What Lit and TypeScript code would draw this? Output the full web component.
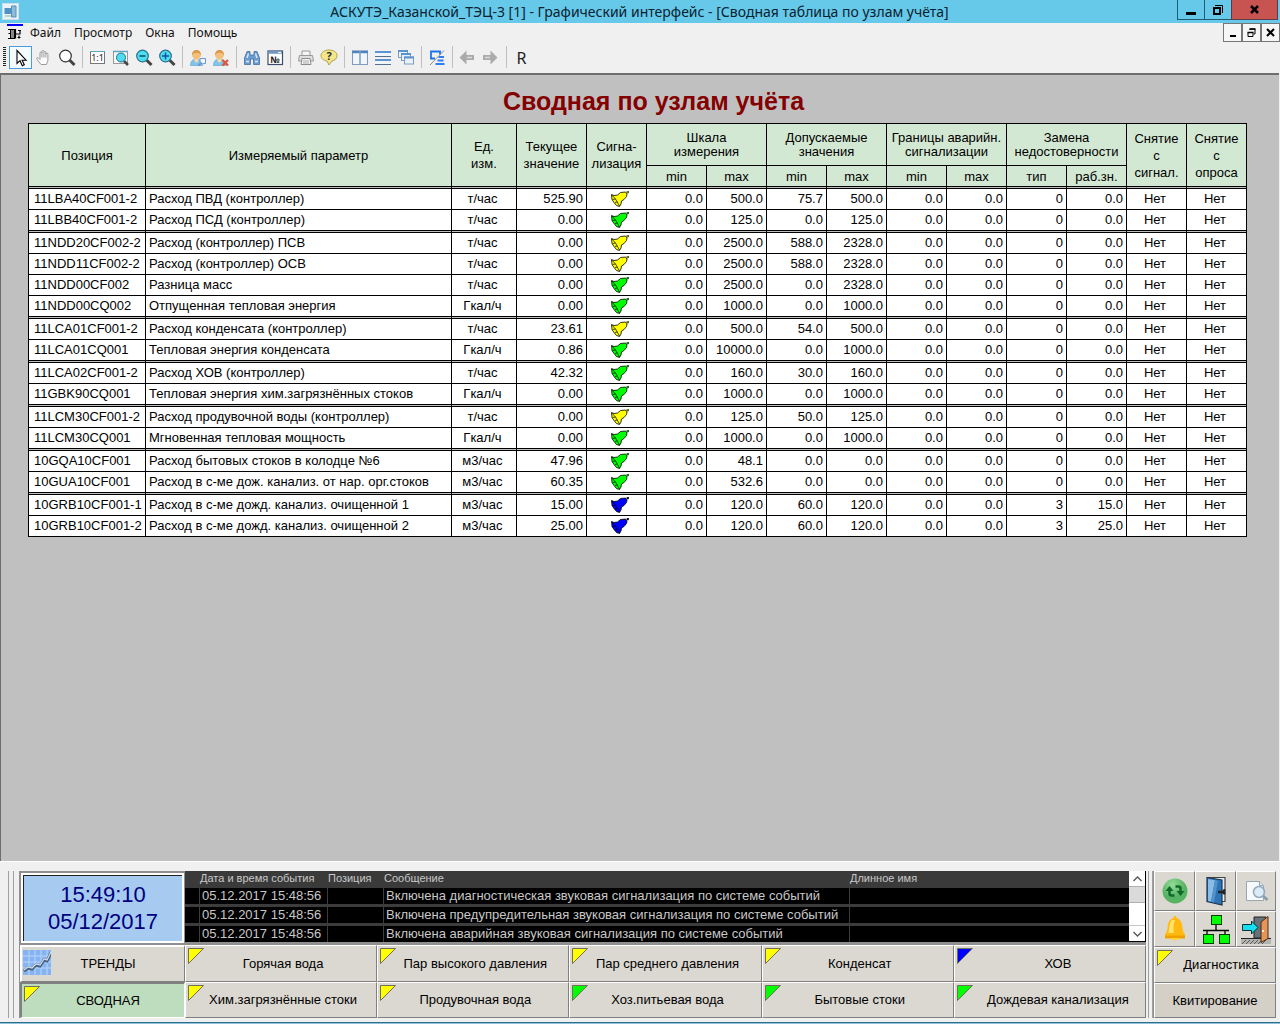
import { LitElement, html, css, svg, nothing, type TemplateResult } from "lit";
import { customElement, property } from "lit/decorators.js";
import { classMap } from "lit/directives/class-map.js";

type Level = "yellow" | "green" | "blue";

interface Row {
  id: string;
  name: string;
  unit: string;
  value: string;
  level: Level;
  scale: [string, string];
  allowed: [string, string];
  sub?: [string, string];
}

const row = (id: string, name: string, unit: string, value: string, level: Level,
  max: string, lo: string, hi: string, sub?: [string, string]): Row =>
  ({ id, name, unit, value, level, scale: ["0.0", max], allowed: [lo, hi], sub });

const GROUPS: Row[][] = [
  [
    row("11LBA40CF001-2", "Расход ПВД (контроллер)", "т/час", "525.90", "yellow", "500.0", "75.7", "500.0"),
    row("11LBB40CF001-2", "Расход ПСД (контроллер)", "т/час", "0.00", "green", "125.0", "0.0", "125.0"),
  ],
  [
    row("11NDD20CF002-2", "Расход (контроллер) ПСВ", "т/час", "0.00", "yellow", "2500.0", "588.0", "2328.0"),
    row("11NDD11CF002-2", "Расход (контроллер) ОСВ", "т/час", "0.00", "yellow", "2500.0", "588.0", "2328.0"),
    row("11NDD00CF002", "Разница масс", "т/час", "0.00", "green", "2500.0", "0.0", "2328.0"),
    row("11NDD00CQ002", "Отпущенная тепловая энергия", "Гкал/ч", "0.00", "green", "1000.0", "0.0", "1000.0"),
  ],
  [
    row("11LCA01CF001-2", "Расход конденсата (контроллер)", "т/час", "23.61", "yellow", "500.0", "54.0", "500.0"),
    row("11LCA01CQ001", "Тепловая энергия конденсата", "Гкал/ч", "0.86", "green", "10000.0", "0.0", "1000.0"),
  ],
  [
    row("11LCA02CF001-2", "Расход ХОВ (контроллер)", "т/час", "42.32", "green", "160.0", "30.0", "160.0"),
    row("11GBK90CQ001", "Тепловая энергия хим.загрязнённых стоков", "Гкал/ч", "0.00", "green", "1000.0", "0.0", "1000.0"),
  ],
  [
    row("11LCM30CF001-2", "Расход продувочной воды (контроллер)", "т/час", "0.00", "yellow", "125.0", "50.0", "125.0"),
    row("11LCM30CQ001", "Мгновенная тепловая мощность", "Гкал/ч", "0.00", "green", "1000.0", "0.0", "1000.0"),
  ],
  [
    row("10GQA10CF001", "Расход бытовых стоков в колодце №6", "м3/час", "47.96", "green", "48.1", "0.0", "0.0"),
    row("10GUA10CF001", "Расход в с-ме дож. канализ. от нар. орг.стоков", "м3/час", "60.35", "green", "532.6", "0.0", "0.0"),
  ],
  [
    row("10GRB10CF001-1", "Расход в с-ме дожд. канализ. очищенной 1", "м3/час", "15.00", "blue", "120.0", "60.0", "120.0", ["3", "15.0"]),
    row("10GRB10CF001-2", "Расход в с-ме дожд. канализ. очищенной 2", "м3/час", "25.00", "blue", "120.0", "60.0", "120.0", ["3", "25.0"]),
  ],
];

const COLORS: Record<Level, string> = { yellow: "#ffff00", green: "#00ff00", blue: "#0000ff" };

const bell = (level: Level) => html`<svg class="bell" width="18" height="16" viewBox="0 0 18 16" role="img" aria-label="Сигнализация">
  <path d="M.5 3.500 3 4.500 6.500 4 9.500 1.500 14.500 1 16 3 15.500 5.500 13 8.500 10.500 10 10 13 8.500 15.500 5.500 14.500 3 11.500 1 8.500Z"
    fill=${COLORS[level]} stroke="#000" stroke-width=".8"/>
  <path d="M.8 4 4.500 8 8.500 15M1.500 8.500 4.500 8M4 11.500 6.300 11" fill="none" stroke="#000" stroke-width=".7"/>
  <circle cx="16.800" cy="1" r="1" fill=${level === "blue" ? "#000" : COLORS[level]} stroke="#000" stroke-width=".7"/>
</svg>`;

const glass = (sign: TemplateResult | typeof nothing, fill: string, stroke: string) => svg`
  <path d="M12.500 12 17.500 17" stroke="#444" stroke-width="3"/>
  <circle cx="8.500" cy="8" r="5.800" fill=${fill} stroke=${stroke} stroke-width="1.200"/>${sign}`;

const person = svg`
  <path d="M2.500 17.500c0-4.500 2.500-6.500 6-6.500s6 2 6 6.500Z" fill="#7fc4ea" stroke="#58a3d0" stroke-width=".6"/>
  <path d="M6.500 10h4v3l-2 2-2-2Z" fill="#f6d9a8"/>
  <circle cx="8.500" cy="7" r="4.300" fill="#f3bf7d"/>
  <path d="M4 7.500c-.8-7.500 9.800-7.500 9 0-1-2-2.500-2.700-4.500-2.700S5 5.500 4 7.500Z" fill="#dd9a45"/>`;

const TOOL_ICONS: Record<string, TemplateResult> = {
  pointer: svg`<path d="M6 2.500v13l3-2.800 2.300 5 2-1-2.200-4.500h4Z" fill="#fff" stroke="#000" stroke-width="1.100"/>`,
  hand: svg`<path d="M7 16.500 3.500 12c-1.500-2-.5-3 1-2L6 11.500V5c0-1.500 1.900-1.500 1.900 0V3.500c0-1.500 2-1.500 2 0v1c0-1.300 2-1.300 2 0V6c0-1.200 2-1.200 2 0v6.500l-1.500 4ZM7.900 5v4.500M9.900 4.500v5M11.900 5v4.500" fill="#fbfbfb" stroke="#9c9c9c" stroke-width="1"/>`,
  zoom: glass(nothing, "#fdfdfd", "#333"),
  actual: svg`<rect x="2.500" y="3.500" width="14" height="12" fill="#fff" stroke="#777"/><path d="M2 3.500h15" stroke="#5aa7c0"/><text x="9.500" y="13" class="t9">1:1</text>`,
  fit: svg`<rect x="2.500" y="3.500" width="14" height="12" fill="#f8f8f8" stroke="#999"/><path d="M2 3.500h15" stroke="#5aa7c0" stroke-width="1.500"/><path d="M13 13 17 17" stroke="#444" stroke-width="2.500"/><circle cx="10" cy="9.500" r="4.500" fill="#4ddcf0" stroke="#27718c"/>`,
  out: glass(svg`<path d="M5.500 8h6" stroke="#104a6a" stroke-width="1.500"/>`, "#4ddcf0", "#27718c"),
  in: glass(svg`<path d="M5 8h7M8.500 4.500v7" stroke="#1450a0" stroke-width="1.500"/>`, "#4ddcf0", "#27718c"),
  login: svg`${person}<path d="M10.500 17.500 15 13" stroke="#6b97cf" stroke-width="2"/><path d="M12 10.500h5.500v5l-3 .2-2.500-2Z" fill="#eef5ff" stroke="#6b97cf"/>`,
  logout: svg`${person}<path d="m11.500 12 5.500 5.500m0-5.500-5.500 5.500" stroke="#e0533a" stroke-width="2.200"/>`,
  find: svg`<path d="M5 3.500h3V7h4V3.500h3L17.500 10v6.500h-6V11h-3v5.500h-6V10Z" fill="#6b9bd0" stroke="#44709f" stroke-width=".8"/><path d="M5 10 6.500 5.500m7 0L15 10M4 13.500h3m6 0h3" stroke="#d8e9fa" stroke-width="1.400"/>`,
  number: svg`<rect x="3" y="3" width="14.500" height="13.500" fill="#fff" stroke="#3d4d68" stroke-width="1.200"/><path d="M3.500 4.500h13.500" stroke="#6f95c8" stroke-width="2.500"/><path d="M13 4.500h3" stroke="#fff"/><text x="10" y="14.500" class="t9 b">№</text>`,
  print: svg`<path d="M6 7V3h8v4" fill="#f4f4f4" stroke="#999"/><path d="M3.500 7.500h13l1 5.500h-15Z" fill="#dedede" stroke="#999"/><path d="M6 10.500h8l1 6H5Z" fill="#f4f4f4" stroke="#8b8b8b"/><path d="M7 13h6m-6 2h6" stroke="#aaa"/>`,
  help: svg`<path d="M10 2c4.500 0 8 2 8 5.500 0 3-2 5-5 5.500l-3 4-2-4C4.500 12.500 2 10.500 2 7.500S5.500 2 10 2Z" fill="#f4e68a" stroke="#b3a14b"/><text x="10" y="11.500" class="t11 b">?</text>`,
  columns: svg`<rect x="2.500" y="3" width="15" height="13.500" fill="#f0f6fc" stroke="#7f9cbc"/><path d="M2 4h16" stroke="#4f84bd" stroke-width="2.500"/><path d="M10 3v13.500" stroke="#7f9cbc" stroke-width="1.500"/>`,
  rows: svg`<path d="M2 3h16v6H2ZM2 11h16v6H2Z" fill="#eef5fc"/><path d="M2 4h16M2 12h16" stroke="#5b94ce" stroke-width="2"/><path d="M2 8.500h16M2 16.500h16" stroke="#566f91"/>`,
  cascade: svg`<g fill="#eaf2fb" stroke="#7f9cbc"><rect x="2.500" y="2.500" width="9" height="7"/><rect x="5.500" y="5.500" width="9" height="7"/><rect x="8.500" y="9" width="9" height="7"/></g><path d="M2 3h10m-7 3h10m-7 3.500h10" stroke="#5b94ce" stroke-width="2"/>`,
  split: svg`<path d="M4 10.500V3.500h9v3M3 10.500h5" fill="none" stroke="#1c74ea" stroke-width="1.800"/><path d="M11.500 9h5.500M10.500 12.500h6M8.500 16h9" stroke="#2f7df0" stroke-width="2.200"/><path d="M3 17 17 2.500" stroke="#8b8b8b"/>`,
  back: svg`<path d="M1.500 9.500 8.500 2.500v4.500H16v5H8.500v4.500Z" fill="#ababab"/><path d="M9 9.500H14" stroke="#dadada" stroke-width="1.500"/>`,
  forward: svg`<path d="M16.500 9.500 9.500 2.500v4.500H2v5h7.500v4.500Z" fill="#ababab"/><path d="M4 9.500h5" stroke="#dadada" stroke-width="1.500"/>`,
};

const TOOLS: [string, string][][] = [
  [["pointer", "Выбор"], ["hand", "Рука"], ["zoom", "Масштаб"]],
  [["actual", "1:1"], ["fit", "Вписать"], ["out", "Уменьшить"], ["in", "Увеличить"]],
  [["login", "Вход"], ["logout", "Выход"]],
  [["find", "Поиск"], ["number", "Номер"]],
  [["print", "Печать"], ["help", "Справка"]],
  [["columns", "Столбцы"], ["rows", "Строки"], ["cascade", "Каскад"]],
  [["split", "Разделить"]],
  [["back", "Назад"], ["forward", "Вперёд"]],
];

const NAV: [string, Level][] = [
  ["Горячая вода", "yellow"], ["Пар высокого давления", "yellow"], ["Пар среднего давления", "yellow"],
  ["Конденсат", "yellow"], ["ХОВ", "blue"],
  ["Хим.загрязнённые стоки", "yellow"], ["Продувочная вода", "yellow"], ["Хоз.питьевая вода", "green"],
  ["Бытовые стоки", "green"], ["Дождевая канализация", "green"],
];

const EVENTS = [
  "Включена диагностическая звуковая сигнализация по системе событий",
  "Включена предупредительная звуковая сигнализация по системе событий",
  "Включена аварийная звуковая сигнализация по системе событий",
];

const flag = (level: Level) => html`<svg class="flag" width="17" height="17" viewBox="0 0 17 17" aria-hidden="true">
  <path d="M.5.5h15L.5 15.500Z" fill=${COLORS[level]} stroke="#6f6f5a"/></svg>`;

const PANEL_ICONS: [string, TemplateResult][] = [
  ["Обновить", svg`<defs><radialGradient id="g" cx=".4" cy=".25"><stop offset="0" stop-color="#93dc98"/><stop offset="1" stop-color="#56b363"/></radialGradient></defs>
    <circle cx="16" cy="16" r="12.500" fill="url(#g)"/>
    <path d="M15.500 20.500H12.500a2 2 0 0 1-2-2V15" fill="none" stroke="#0f6a2a" stroke-width="2.500"/>
    <path d="m6.500 16 4-5 4 5Z" fill="#0f6a2a"/>
    <path d="M16.500 11.500H19.500a2 2 0 0 1 2 2V17" fill="none" stroke="#0f6a2a" stroke-width="2.500"/>
    <path d="m17.500 16 4 5 4-5Z" fill="#0f6a2a"/>`],
  ["Вход", svg`<path d="M7 2.500h18v24h-4" fill="#e9eef3" stroke="#444" stroke-width="1.200"/>
    <path d="M7 2.500 22 5v25L7 26.500Z" fill="#2e74b5" stroke="#1c3554" stroke-width="1.200"/><path d="M8 4 15 5.200 11 26.500 8 26Z" fill="#8bbce6"/><path d="M15 5.200 18 5.700 14 27.500 11 26.500Z" fill="#4f93cd"/>
    <path d="M18 17h5l2-2.500M23 17l2 2" stroke="#222" stroke-width="2.500" fill="none"/>`],
  ["Просмотр", svg`<path d="M6.500 6.500h13l4 4v15h-17Z" fill="#f7fafc" stroke="#9aa5b0"/><path d="M19.500 6.500v4h4" fill="#dfe5ea" stroke="#9aa5b0"/>
    <path d="m22.500 20.500 5 4.500" stroke="#8e9dac" stroke-width="3"/><circle cx="19" cy="17" r="5.500" fill="#d6e9f6" fill-opacity=".85" stroke="#93a9bd" stroke-width="1.500"/>`],
  ["Звонок", svg`<path d="M14.500 5c0-3 3-3 3 0 5 1.500 5.500 6 6 10 .3 3 1 4.500 2.500 6.500v3.500H6v-3.500c1.500-2 2.200-3.500 2.500-6.500.5-4 1-8.500 6-10Z" fill="#ffb90f"/>
    <path d="M13 7c-2.500 3-3 9-3.500 13H15c-1-5-.5-9 1-13Z" fill="#ffe26a"/><path d="M6 22.500h20v3H6Z" fill="#f0a000"/><path d="M11 25h10c-1 3-9 3-10 0Z" fill="#ffd23a"/>`],
  ["Сеть", svg`<path d="M16 12v5M7 22v-4.500M25 22v-4.500M3 17.500h26" fill="none" stroke="#000" stroke-width="1.300"/>
    <g fill="#00ff00" stroke="#053b05"><rect x="11.500" y="2.500" width="10" height="9"/><rect x="3.500" y="21.500" width="10" height="9"/><rect x="19.500" y="21.500" width="10" height="9"/></g>`],
  ["Выход", svg`<path d="M14 4h12v21H14Z" fill="#66717a" stroke="#222"/><path d="M1 26h30v5H1Z" fill="#b3b3b0"/><path d="M1 25.500h30" stroke="#222"/><path d="m2 31 4-4m0 4 4-4m0 4 4-4m0 4 4-4m0 4 4-4m0 4 4-4" stroke="#444" stroke-width=".8"/>
    <path d="M2.500 11.500h9V8l6.500 6.500-6.500 6.500v-3.500h-9Z" fill="#16dff0" stroke="#033"/><path d="m21 9 7-5.500v22L21 29.500Z" fill="#e2965a" stroke="#532b10"/><circle cx="23" cy="18" r="1" fill="#fff"/>`],
];

@customElement("app-titlebar")
class AppTitlebar extends LitElement {
  static styles = css`
    :host { display: flex; height: 23px; background: #66c9e9; padding-left: 2px; align-items: flex-start; }
    .logo { width: 17px; height: 17px; margin-top: 3px; }
    .title { flex: 1; margin: 0; font: 14px/23px "Noto Sans", "Open Sans", sans-serif; text-align: center; white-space: nowrap; padding-left: 82px; color: #0b2230; }
    .buttons { display: flex; margin-right: 2px; }
    button { height: 20px; width: 28px; padding: 0; border: 1px solid #245a70; border-top: 0; background: none; display: grid; place-items: center; margin-left: -1px; }
    .close { width: 47px; background: #c75450; border-color: #5d3a45; }
  `;
  render() {
    return html`
      <svg class="logo" viewBox="0 0 17 17" aria-hidden="true"><rect x=".5" y=".5" width="16" height="16" fill="#e8f2f8" stroke="#c9e0ec"/><path d="M2.500 5h8v6h-8Z" fill="#4d93c5"/><path d="M9.500 3h4.500v11H9.500Z" fill="#8dbbd9" stroke="#5b8fb5"/><path d="M3 13h6" stroke="#8ba"/></svg>
      <h1 class="title">АСКУТЭ_Казанской_ТЭЦ-3 [1] - Графический интерфейс - [Сводная таблица по узлам учёта]</h1>
      <div class="buttons">
        <button aria-label="Свернуть"><svg width="12" height="12"><path d="M1 9.500h10" stroke="#000" stroke-width="3"/></svg></button>
        <button aria-label="Восстановить"><svg width="12" height="12"><path d="M2 4h6v6H2Z" fill="none" stroke="#000" stroke-width="2"/><path d="M3 1.500h7.500V9" fill="none" stroke="#000"/></svg></button>
        <button class="close" aria-label="Закрыть"><svg width="12" height="12"><path d="m2 2 7 7m0-7-7 7" stroke="#000" stroke-width="2.500"/></svg></button>
      </div>`;
  }
}

@customElement("app-toolbar")
class AppToolbar extends LitElement {
  static styles = css`
    :host { display: block; background: #f0f0f0; color: #111; }
    .menu { display: flex; height: 20px; padding-left: 7px; gap: 13px; font: 12px/20px "Noto Sans", "Open Sans", sans-serif; }
    .menu a { color: inherit; text-decoration: none; }
    .doc { margin-right: -6px; margin-top: 1px; width: 16px; height: 16px; }
    .mdi { margin-left: auto; display: flex; align-items: flex-start; }
    .mdi button { width: 19px; height: 19px; border: 1px solid #777; background: #f6f6f6; padding: 0; display: grid; place-items: center; }
    .tools { display: flex; box-sizing: border-box; height: 30px; padding: 3px 0 0 3px; align-items: flex-start; }
    .grip { width: 3px; height: 20px; margin: 1px 3px 0 0; background: repeating-linear-gradient(#222 0 1px, #f0f0f0 1px 2px); }
    .set { display: flex; }
    .set + .set::before { content: ""; width: 1px; height: 22px; background: #c0c0c0; margin: 0 3px 0 4px; }
    .tool { width: 23px; height: 23px; padding: 0; border: 1px solid transparent; background: none; display: grid; place-items: center; color: #222; font: 16px/20px "Noto Sans", sans-serif; }
    .tool.on { border-color: #4a9be0; background: #f5faff; }
    .t9 { font: 9px "Noto Sans", sans-serif; text-anchor: middle; fill: #222; }
    .t11 { font: 11px "Noto Sans", sans-serif; text-anchor: middle; fill: #333; }
    .b { font-weight: 700; }
  `;
  render() {
    return html`
      <nav class="menu">
        <svg class="doc" viewBox="0 0 16 16" aria-hidden="true"><path d="M0 1h16" stroke="#00f" stroke-width="2"/><path d="M3.500 5.500h4v9h-4Z" fill="#888" stroke="#000"/><path d="M1 5.500h7M1.500 9.500h2M1 14.500h7M8.500 5v9.500M9 10h4.500M13 6.500v3.500M11 6.500h3M10.500 13.500h3M12 11.500v3" fill="none" stroke="#000" stroke-width="1.200"/></svg>
        ${["Файл", "Просмотр", "Окна", "Помощь"].map((m) => html`<a href="#">${m}</a>`)}
        <div class="mdi">
          <button aria-label="Свернуть окно"><svg width="11" height="11"><path d="M3 9h6" stroke="#000" stroke-width="2"/></svg></button>
          <button aria-label="Восстановить окно"><svg width="11" height="11"><path d="M2 5.500h5v4H2ZM4 3V2h5v5H8" fill="none" stroke="#000"/><path d="M1.500 5.500h6M3.500 2h6" stroke="#000" stroke-width="1.600"/></svg></button>
          <button aria-label="Закрыть окно"><svg width="11" height="11"><path d="m2 2 7 7m0-7-7 7" stroke="#000" stroke-width="2"/></svg></button>
        </div>
      </nav>
      <div class="tools" role="toolbar">
        <span class="grip"></span>
        ${TOOLS.map((set) => html`<div class="set">${set.map(([key, label]) => html`
          <button class=${classMap({ tool: true, on: key === "pointer" })} aria-label=${label}><svg width="20" height="20" viewBox="0 0 20 20">${TOOL_ICONS[key]}</svg></button>`)}</div>`)}
        <div class="set"><button class="tool">R</button></div>
      </div>`;
  }
}

@customElement("summary-table")
class SummaryTable extends LitElement {
  static styles = css`
    :host { display: block; padding: 10px 32px 0 27px; font: 13px/20px "Liberation Sans", Arial, sans-serif; color: #000; }
    h2 { margin: 0; font: 700 25px/32px "Liberation Sans", Arial, sans-serif; color: #850000; text-align: center; padding-left: 32px; }
    table { width: 100%; table-layout: fixed; border-collapse: separate; border-spacing: 0; border-top: 1px solid #000; border-left: 1px solid #000; margin-top: 6px; }
    .c-id { width: 117px; }
    .c-unit { width: 65px; }
    .c-val { width: 70px; }
    .c-num { width: 60px; }
    th, td { padding: 0; border: solid #000; border-width: 0 1px 1px 0; background: #fff; background-clip: padding-box; white-space: nowrap; }
    th { background-color: #d3e8d3; font-weight: 400; line-height: 17px; height: 20px; }
    .two { height: 41px; line-height: 14px; }
    .three { line-height: 17px; }
    .last, tbody:not(:last-child) tr:last-child td { border-bottom: 3px double #000; }
    td { height: 20px; text-align: right; padding-right: 3px; }
    .id { text-align: left; padding-left: 5px; padding-right: 0; }
    .name { text-align: left; padding-left: 3px; }
    .mid { text-align: center; }
    .alarm { padding: 0 0 0 7px; }
    .bell { display: block; margin: 0 auto; }
  `;
  render() {
    return html`
      <h2>Сводная по узлам учёта</h2>
      <table>
        <colgroup><col class="c-id"><col><col class="c-unit"><col class="c-val">${Array.from({ length: 11 }, () => html`<col class="c-num">`)}</colgroup>
        <thead>
          <tr>
            <th rowspan="2" class="last">Позиция</th><th rowspan="2" class="last">Измеряемый параметр</th>
            <th rowspan="2" class="last three">Ед.<br>изм.</th><th rowspan="2" class="last three">Текущее<br>значение</th>
            <th rowspan="2" class="last three">Сигна-<br>лизация</th>
            <th colspan="2" class="two">Шкала<br>измерения</th><th colspan="2" class="two">Допускаемые<br>значения</th>
            <th colspan="2" class="two">Границы аварийн.<br>сигнализации</th><th colspan="2" class="two">Замена<br>недостоверности</th>
            <th rowspan="2" class="last three">Снятие<br>с<br>сигнал.</th><th rowspan="2" class="last three">Снятие<br>с<br>опроса</th>
          </tr>
          <tr>${["min", "max", "min", "max", "min", "max", "тип", "раб.зн."].map((t) => html`<th class="last">${t}</th>`)}</tr>
        </thead>
        ${GROUPS.map((g) => html`<tbody>${g.map((r) => html`<tr>
          <td class="id">${r.id}</td><td class="name">${r.name}</td><td class="mid">${r.unit}</td><td>${r.value}</td>
          <td class="alarm">${bell(r.level)}</td>
          ${[...r.scale, ...r.allowed, "0.0", "0.0", ...(r.sub ?? ["0", "0.0"])].map((v) => html`<td>${v}</td>`)}
          <td class="mid">Нет</td><td class="mid">Нет</td></tr>`)}</tbody>`)}
      </table>`;
  }
}

@customElement("control-panel")
class ControlPanel extends LitElement {
  @property() time = "15:49:10";
  @property() date = "05/12/2017";

  static styles = css`
    :host { display: flex; padding: 9px 4px 4px 8px; background: #f0f0f0; border-top: 1px solid #fff; font: 13px/16px "Liberation Sans", Arial, sans-serif; color: #000; }
    .grip { width: 4px; border: solid #a0a0a0; border-width: 0 1px; margin-right: 5px; }
    .grip.second { margin: 0 0 0 2px; width: 3px; }
    .main { flex: 1; min-width: 0; display: grid; grid-template-columns: 166px minmax(0, 1fr); grid-template-rows: 74px 73px; background: #909090; }
    .clock { margin: 2px 1px 2px 2px; border: 2px solid #fff; background: #a6caf0; box-shadow: inset 1px 1px 0 #222; color: #000080; font-size: 22px; line-height: 27px; text-align: center; padding: 6px 0 0 1px; }
    .clock time { display: block; }
    button { font: inherit; color: inherit; padding: 0; margin: 0; border: solid; border-width: 1px; border-color: #fff #808080 #808080 #fff; background: #dbd8d1; position: relative; border-radius: 0; }
    .side { display: grid; grid-template-rows: 37px 36px; padding-left: 1px; }
    .side button { padding-left: 10px; border-width: 2px 1px 1px 2px; }
    .side .on { background: #bedcbe; border-color: #808080 #fff #fff #808080; }
    .trend { position: absolute; left: 1px; top: 3px; }
    .flag { position: absolute; left: 2px; top: 2px; }
    .nav { display: grid; grid-template-columns: repeat(5, 1fr); grid-template-rows: 37px 36px; }
    .nav button { padding-left: 4px; }
    .nav button:nth-child(5n) { padding-left: 16px; }
    .log { display: flex; background: #000; margin-bottom: 3px; color: #c8c8c8; }
    table { flex: 1; table-layout: fixed; width: 100%; border-collapse: separate; border-spacing: 0; font-size: 12px; }
    th { background: #3a3a3a; text-align: left; font-weight: 400; font-size: 11px; height: 15px; line-height: 15px; padding: 0 0 2px 1px; white-space: nowrap; }
    td { border: solid #3c3c3c; border-width: 0 0 3px 1px; height: 16px; line-height: 16px; padding: 0 0 0 2px; white-space: nowrap; background: #000; font-size: 13px; }
    td:first-child { border-left: 0; }
    tr:last-child td { border-bottom: 0; }
    .w0 { width: 14px; } .w1 { width: 128px; } .w2 { width: 56px; } .w4 { width: 280px; }
    .scroll { width: 16px; display: flex; flex-direction: column; background: #fff; margin: 0 1px 1px 0; }
    .scroll button { height: 15px; border: 0; background: #fff; display: grid; place-items: center; }
    .thumb { height: 15px; background: #dadada; border: solid #b0b0b0; border-width: 1px 0; }
    .space { flex: 1; border-bottom: 1px solid #c8c8c8; }
    .right { width: 123px; display: grid; grid-template-columns: 41px 41px 1fr; grid-template-rows: 40px 36px 36px 35px; background: #909090; padding-left: 1px; box-sizing: border-box; }
    .right button { display: grid; place-items: center; }
    .right .wide { grid-column: 1 / -1; }
    .right .shift { padding-left: 12px; }
    .ico { width: 32px; height: 32px; }
    .right .ack { background: #d4d0c8; }
  `;
  render() {
    return html`
      <span class="grip"></span>
      <div class="main">
        <div class="clock"><time>${this.time}</time><time>${this.date}</time></div>
        <div class="log">
          <table>
            <colgroup><col class="w0"><col class="w1"><col class="w2"><col><col class="w4"></colgroup>
            <thead><tr><th></th><th>Дата и время события</th><th>Позиция</th><th>Сообщение</th><th>Длинное имя</th></tr></thead>
            <tbody>${EVENTS.map((e) => html`<tr><td></td><td>05.12.2017 15:48:56</td><td></td><td>${e}</td><td></td></tr>`)}</tbody>
          </table>
          <div class="scroll">
            <button aria-label="Вверх"><svg width="9" height="6"><path d="m.5 5 4-4 4 4" fill="none" stroke="#555" stroke-width="1.300"/></svg></button>
            <div class="thumb"></div><div class="space"></div>
            <button aria-label="Вниз"><svg width="9" height="6"><path d="m.5 1 4 4 4-4" fill="none" stroke="#555" stroke-width="1.300"/></svg></button>
          </div>
        </div>
        <div class="side">
          <button><svg class="trend" width="28" height="25" viewBox="0 0 28 25" aria-hidden="true"><path d="M0 0h28v25H0Z" fill="#86b4f2"/><path d="M0 6h28M0 12h28M0 18h28M6 0v25M12 0v25M18 0v25M24 0v25" stroke="#b9d5fa"/><path d="m1 21 4-3 4 1 4-4 4 1 4-6 3 1 4-8" fill="none" stroke="#45617f" stroke-width="3"/><path d="m1 20 4-3 4 1 4-4 4 1 4-6 3 1 4-8" fill="none" stroke="#d5e0ec" stroke-width="1.200"/></svg>ТРЕНДЫ</button>
          <button class="on">${flag("yellow")}СВОДНАЯ</button>
        </div>
        <nav class="nav">${NAV.map(([t, l]) => html`<button>${flag(l)}${t}</button>`)}</nav>
      </div>
      <span class="grip second"></span>
      <div class="right">
        ${PANEL_ICONS.map(([label, icon]) => html`<button aria-label=${label}><svg class="ico" viewBox="0 0 32 32">${icon}</svg></button>`)}
        <button class="wide shift">${flag("yellow")}Диагностика</button>
        <button class="wide ack">Квитирование</button>
      </div>`;
  }
}

@customElement("app-root")
class AppRoot extends LitElement {
  static styles = css`
    :host { display: flex; flex-direction: column; min-height: 100vh; background: #f0f0f0; }
    .work { flex: 1; background: #c0c0c0; border: solid #6e6e6e; border-width: 2px 0 0 1px; margin: 0 1px 0 0; }
    .strip { height: 2px; background: #8fc3dc; border-top: 1px solid #2f6d8c; box-sizing: border-box; }
  `;
  render() {
    return html`
      <app-titlebar></app-titlebar>
      <app-toolbar></app-toolbar>
      <main class="work"><summary-table></summary-table></main>
      <control-panel></control-panel>
      <div class="strip"></div>`;
  }
}
